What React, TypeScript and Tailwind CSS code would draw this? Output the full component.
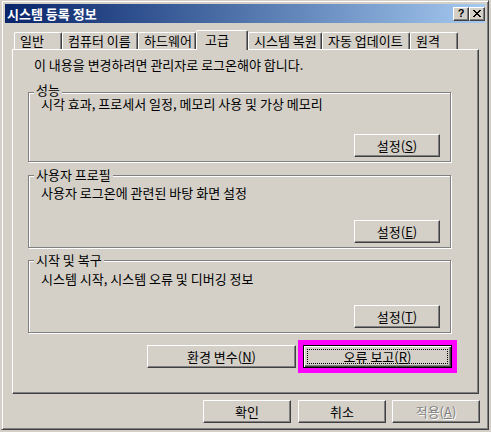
import React from 'react';

const raised =
  'border border-t-white border-l-white border-r-[#404040] border-b-[#404040] shadow-[inset_-1px_-1px_0_#808080]';

const tabs = [
  { label: '일반', w: 'w-[48px]' },
  { label: '컴퓨터 이름', w: 'w-[76px]' },
  { label: '하드웨어', w: 'w-[58px]' },
  { label: '고급', w: 'w-[52px]', active: true },
  { label: '시스템 복원', w: 'w-[74px]' },
  { label: '자동 업데이트', w: 'w-[88px]' },
  { label: '원격', w: 'w-[48px]' },
];

const Mnemonic = ({ text, k }: { text: string; k: string }) => (
  <span>
    {text}(<span className="underline underline-offset-[1px]">{k}</span>)
  </span>
);

const Button = ({
  text,
  k,
  className = '',
  focused = false,
  disabled = false,
}: {
  text: string;
  k: string;
  className?: string;
  focused?: boolean;
  disabled?: boolean;
}) => (
  <button
    className={
      'relative flex items-center justify-center h-[23px] bg-[#d4d0c8] text-[13px] leading-[14px] ' +
      (focused
        ? 'border border-black shadow-[inset_1px_1px_0_#fff,inset_-1px_-1px_0_#404040,inset_-2px_-2px_0_#808080] [outline:5px_solid_#ff00ff] '
        : raised + ' ') +
      (disabled ? 'text-[#808080] [text-shadow:1px_1px_0_#fff] ' : 'text-black ') +
      className
    }
  >
    <Mnemonic text={text} k={k} />
    {focused && <span className="absolute inset-[3px] border border-dotted border-black" />}
  </button>
);

const Group = ({
  title,
  desc,
  k,
  h,
  mt,
  descMt,
  labelCls,
}: {
  title: string;
  desc: string;
  k: string;
  h: string;
  mt: string;
  descMt: string;
  labelCls: string;
}) => (
  <div
    className={`relative ml-[15px] w-[423px] ${h} ${mt} border border-[#808080] shadow-[inset_1px_1px_0_#fff,1px_1px_0_#fff] flex flex-col pb-[4px] pr-[10px]`}
  >
    <span className={`absolute left-[5px] px-[2px] bg-[#d4d0c8] ${labelCls}`}>{title}</span>
    <div className={`${descMt} pl-[12px] leading-[14px]`}>{desc}</div>
    <Button text="설정" k={k} className="mt-auto self-end w-[86px]" />
  </div>
);

const CloseGlyph = () => (
  <svg width="8" height="7" viewBox="0 0 8 7" shapeRendering="crispEdges">
    <path
      d="M0 0h2v1h-2zM6 0h2v1h-2zM1 1h2v1h-2zM5 1h2v1h-2zM2 2h4v1h-4zM3 3h2v1h-2zM2 4h4v1h-4zM1 5h2v1h-2zM5 5h2v1h-2zM0 6h2v1h-2zM6 6h2v1h-2z"
      fill="#000"
    />
  </svg>
);

export default function App() {
  return (
    <div className="w-[491px] h-[432px] bg-[#d4d0c8] overflow-hidden font-['Noto_Sans_CJK_KR',sans-serif] text-[13px] text-black">
      <div className="ml-[1px] w-[488px] h-[430px] border border-t-[#d4d0c8] border-l-[#d4d0c8] border-r-[#404040] border-b-[#404040] shadow-[inset_1px_1px_0_#fff,inset_-1px_-1px_0_#808080] p-[3px] flex flex-col">
        {/* title bar */}
        <div className="h-[19px] flex items-center bg-gradient-to-r from-[#0a246a] to-[#a6caf0]">
          <span className="pl-[2px] text-white font-bold text-[13px] leading-[14px]">시스템 등록 정보</span>
          <div className="ml-auto flex">
            <div className={`w-[16px] h-[14px] bg-[#d4d0c8] ${raised} flex items-center justify-center`}>
              <span className="font-['Liberation_Sans',sans-serif] font-bold text-[11px] leading-[11px] text-black">?</span>
            </div>
            <div className={`w-[16px] h-[14px] bg-[#d4d0c8] ${raised} flex items-center justify-center`}>
              <CloseGlyph />
            </div>
          </div>
        </div>

        {/* body */}
        <div className="pt-[7px] pl-[7px] flex flex-col">
          <div className="h-[20px] pl-[2px] flex items-end">
            {tabs.map((t) =>
              t.active ? (
                <div
                  key={t.label}
                  className={`relative z-10 ${t.w} h-[20px] bg-[#d4d0c8] border-t border-l border-r border-t-white border-l-white border-r-[#404040] shadow-[inset_-1px_0_0_#808080] rounded-t-[2px] pl-[8px] pt-[2px] leading-[14px] whitespace-nowrap`}
                >
                  {t.label}
                </div>
              ) : (
                <div
                  key={t.label}
                  className={`${t.w} h-[17px] mb-[1px] border-t border-l border-r border-t-white border-l-white border-r-[#404040] shadow-[inset_-1px_0_0_#808080] rounded-t-[2px] pl-[5px] pt-[1px] leading-[14px] whitespace-nowrap`}
                >
                  {t.label}
                </div>
              )
            )}
          </div>

          <div className={`w-[467px] h-[345px] -mt-[1px] ${raised} flex flex-col`}>
            <div className="pl-[21px] pt-[8px] leading-[14px]">이 내용을 변경하려면 관리자로 로그온해야 합니다.</div>
            <Group
              title="성능"
              desc="시각 효과, 프로세서 일정, 메모리 사용 및 가상 메모리"
              k="S"
              h="h-[70px]"
              mt="mt-[20px]"
              descMt="mt-[4px]"
              labelCls="-top-[8px] leading-[10px]"
            />
            <Group
              title="사용자 프로필"
              desc="사용자 로그온에 관련된 바탕 화면 설정"
              k="E"
              h="h-[73px]"
              mt="mt-[13px]"
              descMt="mt-[10px]"
              labelCls="-top-[8px] leading-[14px]"
            />
            <Group
              title="시작 및 복구"
              desc="시스템 시작, 시스템 오류 및 디버깅 정보"
              k="T"
              h="h-[73px]"
              mt="mt-[12px]"
              descMt="mt-[11px]"
              labelCls="-top-[8px] leading-[14px]"
            />
            <div className="mt-[12px] ml-[134px] flex">
              <Button text="환경 변수" k="N" className="w-[149px]" />
              <Button text="오류 보고" k="R" className="w-[149px] ml-[7px]" focused />
            </div>
          </div>

          <div className="mt-[6px] ml-[191px] flex">
            <button className={`h-[23px] w-[88px] bg-[#d4d0c8] ${raised} flex items-center justify-center leading-[14px]`}>
              확인
            </button>
            <button className={`h-[23px] w-[88px] ml-[7px] bg-[#d4d0c8] ${raised} flex items-center justify-center leading-[14px]`}>
              취소
            </button>
            <Button text="적용" k="A" className="w-[88px] ml-[6px]" disabled />
          </div>
        </div>
      </div>
    </div>
  );
}
